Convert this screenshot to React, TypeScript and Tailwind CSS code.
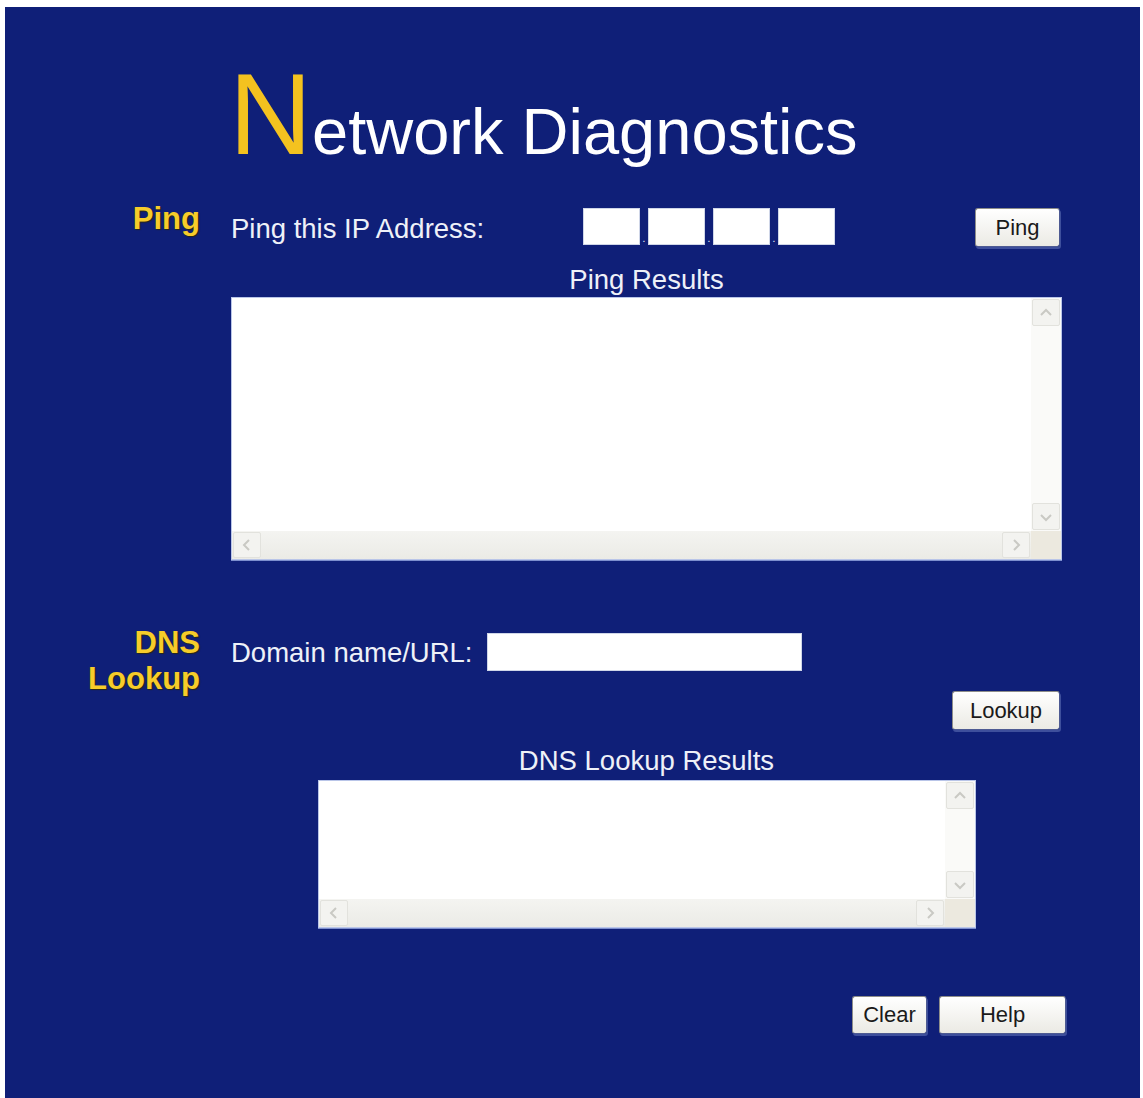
import type { ReactNode } from 'react'

const font = "font-['Liberation_Sans',Arial,sans-serif]"

function Chevron({ dir }: { dir: 'up' | 'down' | 'left' | 'right' }) {
  const pts = {
    up: '3,10 8,5 13,10',
    down: '3,6 8,11 13,6',
    left: '10,3 5,8 10,13',
    right: '6,3 11,8 6,13',
  }[dir]
  return (
    <svg width="16" height="16" viewBox="0 0 16 16" className="block">
      <polyline points={pts} fill="none" stroke="#c9c9c4" strokeWidth="2" />
    </svg>
  )
}

function ScrollButton({ dir, className }: { dir: 'up' | 'down' | 'left' | 'right'; className: string }) {
  return (
    <div className={`flex items-center justify-center bg-[#f3f3f0] border border-[#e2e2dd] rounded-[2px] ${className}`}>
      <Chevron dir={dir} />
    </div>
  )
}

// looks like an old IE textarea with both scrollbars showing
function ResultsBox({ className }: { className: string }) {
  return (
    <div className={`flex flex-col bg-white border border-[#b9c5e8] shadow-[0_1px_0_#7d8fce] ${className}`}>
      <div className="flex flex-1 min-h-0">
        <div className="flex-1" />
        <div className="w-[30px] flex flex-col justify-between bg-[#fafaf8] p-[1px]">
          <ScrollButton dir="up" className="h-[27px]" />
          <ScrollButton dir="down" className="h-[27px]" />
        </div>
      </div>
      <div className="flex h-[28px]">
        <div className="flex-1 flex justify-between bg-gradient-to-b from-[#f4f4f1] to-[#ebebe6] p-[1px]">
          <ScrollButton dir="left" className="w-[28px]" />
          <ScrollButton dir="right" className="w-[28px]" />
        </div>
        <div className="w-[30px] bg-[#ece9df]" />
      </div>
    </div>
  )
}

function OldButton({ children, className }: { children: ReactNode; className: string }) {
  return (
    <button
      type="button"
      className={`shrink-0 flex items-center justify-center rounded-[3px] border border-[#8e8e8a] border-b-[#4d5a92] border-r-[#4d5a92] bg-gradient-to-b from-white to-[#ebeae4] shadow-[1px_2px_0_#3e4f9c] text-[22px] leading-none text-[#1a1a1a] ${font} ${className}`}
    >
      {children}
    </button>
  )
}

function SectionLabel({ children, className }: { children: ReactNode; className: string }) {
  return (
    <div
      className={`w-[195px] shrink-0 text-right font-bold text-[31px] text-[#f6cc2a] [text-shadow:1px_1px_1px_#2b2a10] ${font} ${className}`}
    >
      {children}
    </div>
  )
}

function IpBox() {
  return <input type="text" className="w-[57px] h-[37px] bg-white border border-[#cfd6e8] outline-none" />
}

function Dot() {
  return <span className="w-[8px] self-end text-center text-[10px] leading-[12px] text-white">.</span>
}

export default function App() {
  return (
    <div className="min-h-screen bg-white pt-[7px] pl-[5px]">
      <div className={`w-[1135px] h-[1091px] bg-[#0f1f78] pt-[50px] text-[#eef1f8] ${font}`}>
        {/* title */}
        <div className="flex items-baseline pl-[224px] leading-none">
          <span className="text-[115px] text-[#f4c21f]">N</span>
          <span className="text-[65px] text-white">etwork Diagnostics</span>
        </div>

        {/* ping */}
        <div className="flex mt-[36px]">
          <SectionLabel className="-mt-[5px] leading-none">Ping</SectionLabel>
          <div className="ml-[31px] w-[831px] flex flex-col">
            <div className="flex items-start">
              <span className="w-[352px] shrink-0 mt-[7px] text-[27.5px] leading-none">Ping this IP Address:</span>
              <div className="flex">
                <IpBox />
                <Dot />
                <IpBox />
                <Dot />
                <IpBox />
                <Dot />
                <IpBox />
              </div>
              <OldButton className="ml-auto mr-[2px] w-[85px] h-[39px]">Ping</OldButton>
            </div>
            <div className="mt-[18px] text-center text-[27.5px] leading-[30px]">Ping Results</div>
            <ResultsBox className="mt-[2px] h-[263px]" />
          </div>
        </div>

        {/* dns lookup */}
        <div className="flex mt-[73px]">
          <SectionLabel className="-mt-[8px] leading-[36px]">
            DNS
            <br />
            Lookup
          </SectionLabel>
          <div className="ml-[31px] w-[831px] flex flex-col">
            <div className="flex items-start gap-[15px]">
              <span className="mt-[6px] text-[27.5px] leading-none">Domain name/URL:</span>
              <input type="text" className="w-[315px] h-[38px] bg-white border border-[#cfd6e8] outline-none" />
            </div>
            <div className="flex justify-end pr-[2px] mt-[20px]">
              <OldButton className="w-[108px] h-[39px]">Lookup</OldButton>
            </div>
            <div className="mt-[16px] text-center text-[27.5px] leading-[30px]">DNS Lookup Results</div>
            <ResultsBox className="mt-[4px] mx-auto w-[658px] h-[148px]" />
            <div className="flex gap-[12px] pl-[621px] mt-[68px]">
              <OldButton className="w-[75px] h-[38px]">Clear</OldButton>
              <OldButton className="w-[127px] h-[38px]">Help</OldButton>
            </div>
          </div>
        </div>
      </div>
    </div>
  )
}
